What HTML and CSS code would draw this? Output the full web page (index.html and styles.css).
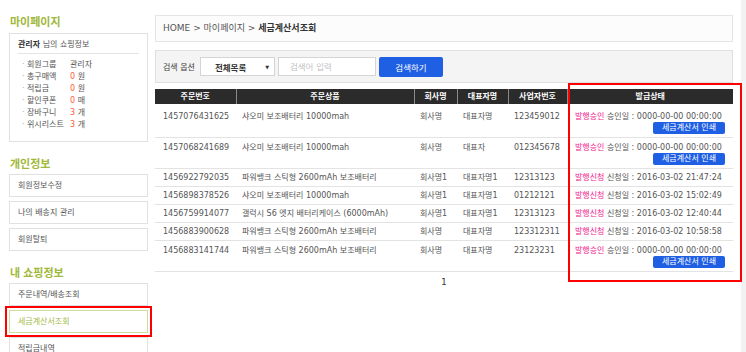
FILE: index.html
```html
<!DOCTYPE html>
<html lang="ko">
<head>
  <meta charset="UTF-8" />
  <meta name="viewport" content="width=device-width, initial-scale=1.0" />
  <title>세금계산서조회</title>
  <link rel="stylesheet" href="styles.css">
</head>
<body>
  <div class="page">
    <aside class="side">
      <h2 class="side-title">마이페이지</h2>
      <div class="info-box">
        <p class="info-head"><strong>관리자</strong> 님의 쇼핑정보</p>
        <ul class="info-list">
          <li><span class="label">회원그룹</span>관리자</li>
          <li><span class="label">총구매액</span><em>0</em> 원</li>
          <li><span class="label">적립금</span><em>0</em> 원</li>
          <li><span class="label">할인쿠폰</span><em>0</em> 매</li>
          <li><span class="label">장바구니</span><em>3</em> 개</li>
          <li><span class="label">위시리스트</span><em>3</em> 개</li>
        </ul>
      </div>

      <h2 class="side-title">개인정보</h2>
      <ul class="menu">
        <li>회원정보수정</li>
        <li>나의 배송지 관리</li>
        <li>회원탈퇴</li>
      </ul>

      <h2 class="side-title">내 쇼핑정보</h2>
      <ul class="menu">
        <li>주문내역/배송조회</li>
        <li class="on">세금계산서조회</li>
        <li>적립금내역</li>
      </ul>
    </aside>

    <main class="content">
      <div class="crumb">HOME &gt; 마이페이지 &gt; <strong>세금계산서조회</strong></div>

      <form class="search">
        <label>검색 옵션</label>
        <div class="select">전체목록<span class="arrow">▼</span></div>
        <input type="text" placeholder="검색어 입력" />
        <button type="button">검색하기</button>
      </form>

      <div class="list">
        <table>
          <colgroup>
            <col style="width:81px">
            <col style="width:178px">
            <col style="width:43px">
            <col style="width:51px">
            <col style="width:59px">
            <col style="width:166px">
          </colgroup>
          <thead>
            <tr>
              <th>주문번호</th>
              <th>주문상품</th>
              <th>회사명</th>
              <th>대표자명</th>
              <th>사업자번호</th>
              <th>발급상태</th>
            </tr>
          </thead>
          <tbody>
            <tr class="tall">
              <td>1457076431625</td>
              <td>샤오미 보조배터리 10000mah</td>
              <td>회사명</td>
              <td>대표자명</td>
              <td>123459012</td>
              <td class="state">
                <b>발행승인</b> 승인일 : 0000-00-00 00:00:00
                <div class="print"><span>세금계산서 인쇄</span></div>
              </td>
            </tr>
            <tr class="tall">
              <td>1457068241689</td>
              <td>샤오미 보조배터리 10000mah</td>
              <td>회사명</td>
              <td>대표자</td>
              <td>012345678</td>
              <td class="state">
                <b>발행승인</b> 승인일 : 0000-00-00 00:00:00
                <div class="print"><span>세금계산서 인쇄</span></div>
              </td>
            </tr>
            <tr>
              <td>1456922792035</td>
              <td>파워뱅크 스틱형 2600mAh 보조배터리</td>
              <td>회사명1</td>
              <td>대표자명1</td>
              <td>12313123</td>
              <td class="state"><b>발행신청</b> 신청일 : 2016-03-02 21:47:24</td>
            </tr>
            <tr>
              <td>1456898378526</td>
              <td>샤오미 보조배터리 10000mah</td>
              <td>회사명1</td>
              <td>대표자명1</td>
              <td>01212121</td>
              <td class="state"><b>발행신청</b> 신청일 : 2016-03-02 15:02:49</td>
            </tr>
            <tr>
              <td>1456759914077</td>
              <td>갤럭시 S6 엣지 배터리케이스 (6000mAh)</td>
              <td>회사명1</td>
              <td>대표자명1</td>
              <td>12313123</td>
              <td class="state"><b>발행신청</b> 신청일 : 2016-03-02 12:40:44</td>
            </tr>
            <tr>
              <td>1456883900628</td>
              <td>파워뱅크 스틱형 2600mAh 보조배터리</td>
              <td>회사명</td>
              <td>대표자명</td>
              <td>123312311</td>
              <td class="state"><b>발행신청</b> 신청일 : 2016-03-02 10:58:58</td>
            </tr>
            <tr class="tall">
              <td>1456883141744</td>
              <td>파워뱅크 스틱형 2600mAh 보조배터리</td>
              <td>회사명</td>
              <td>대표자명</td>
              <td>23123231</td>
              <td class="state">
                <b>발행승인</b> 승인일 : 0000-00-00 00:00:00
                <div class="print"><span>세금계산서 인쇄</span></div>
              </td>
            </tr>
          </tbody>
        </table>
        <div class="mark"></div>
      </div>

      <div class="paging">1</div>
    </main>
  </div>
</body>
</html>
```

FILE: styles.css
```css
* {
  box-sizing: border-box;
}

body {
  margin: 0;
  background: #f2f2f2;
  font-family: "DejaVu Sans", "Noto Sans CJK KR", sans-serif;
  font-size: 8px;
  color: #555;
  overflow: hidden;
}

ul {
  list-style: none;
  margin: 0;
  padding: 0;
}

h2,
p {
  margin: 0;
}

.page {
  display: flex;
  align-items: flex-start;
  gap: 7px;
  width: 741px;
  min-height: 352px;
  padding: 13px 0 0 9px;
  background: #fff;
}

/* sidebar */

.side {
  width: 139px;
  flex: none;
}

.side-title {
  font-family: "Noto Sans CJK KR", sans-serif;
  font-size: 11px;
  line-height: 16px;
  font-weight: bold;
  color: #9fb83a;
  margin: 13px 0 3px 1px;
}

.side-title:first-child {
  margin-top: 0;
  margin-bottom: 4px;
}

.info-box {
  border: 1px solid #e1e1e1;
  padding: 5px 8px 10px;
}

.info-head {
  line-height: 12px;
  padding-bottom: 2px;
  border-bottom: 1px solid #e4e4e4;
}

.info-head strong {
  color: #333;
}

.info-list {
  margin-top: 5px;
}

.info-list li {
  line-height: 12px;
  padding-left: 4px;
}

.info-list li::before {
  content: "·";
  display: inline-block;
  width: 5px;
  color: #aaa;
}

.info-list .label {
  display: inline-block;
  width: 43px;
}

.info-list em {
  font-style: normal;
  color: #ff5b3a;
}

.menu li {
  border: 1px solid #e1e1e1;
  line-height: 21px;
  padding-left: 8px;
}

.menu li + li {
  margin-top: 4px;
}

.menu li.on {
  border-color: #cfdc9c;
  color: #a3bb4a;
  outline: 2px solid #f00;
  outline-offset: 2px;
}

/* content */

.content {
  width: 578px;
  flex: none;
  margin-top: 2px;
}

.crumb {
  height: 27px;
  line-height: 25px;
  border: 1px solid #e4e4e4;
  background: #fcfcfc;
  padding-left: 7px;
  font-size: 9px;
}

.crumb strong {
  color: #333;
}

.search {
  display: flex;
  align-items: center;
  gap: 3px;
  margin: 8px 0 0;
  height: 33px;
  padding: 0 7px;
  border: 1px solid #e0e0e0;
  background: #f4f4f4;
}

.search label {
  margin-right: 2px;
  color: #444;
}

.select {
  display: flex;
  justify-content: space-between;
  align-items: center;
  width: 75px;
  height: 19px;
  padding: 0 5px 0 14px;
  background: #fff;
  border: 1px solid #d4d4d4;
  font-size: 8.5px;
  font-weight: bold;
  color: #333;
}

.select .arrow {
  font-size: 5px;
}

.search input {
  width: 98px;
  height: 19px;
  padding: 0 0 0 11px;
  border: 1px solid #d4d4d4;
  font: inherit;
  font-size: 8.5px;
  outline: none;
}

.search input::placeholder {
  color: #c2c2c2;
}

.search button {
  width: 64px;
  height: 20px;
  border: none;
  border-radius: 2px;
  background: #1f5fe4;
  color: #fff;
  font: inherit;
  font-size: 8.5px;
}

.list {
  position: relative;
  margin-top: 6px;
}

table {
  width: 100%;
  border-collapse: collapse;
  table-layout: fixed;
}

th {
  height: 15px;
  padding: 0;
  line-height: 15px;
  background: #2b2b2b;
  color: #fff;
  font-weight: bold;
  border-left: 1px solid #8a8a8a;
}

th:first-child {
  border-left: none;
}

td {
  padding: 3px 4px 2px 6px;
  line-height: 12px;
  border-bottom: 1px solid #e3e3e3;
  vertical-align: top;
  white-space: nowrap;
}

td:first-child {
  padding-left: 8px;
}

tr.tall td {
  padding-top: 4px;
  padding-bottom: 3px;
  line-height: 11px;
}

tbody tr:first-child td {
  padding-top: 7px;
}

td.state {
  padding-left: 8px;
  padding-right: 8px;
}

.state b {
  font-weight: normal;
  color: #ef1d8d;
}

.print {
  display: flex;
  justify-content: flex-end;
}

.print span {
  width: 72px;
  height: 12px;
  line-height: 12px;
  text-align: center;
  background: #1f5fe4;
  color: #fff;
  border-radius: 2px;
}

/* annotation frame over the status column */
.mark {
  position: absolute;
  left: 413px;
  top: -6px;
  width: 174px;
  height: 199px;
  border: 2px solid #f00;
}

.paging {
  margin-top: 4px;
  line-height: 12px;
  text-align: center;
  font-size: 8.5px;
  color: #333;
}
```
